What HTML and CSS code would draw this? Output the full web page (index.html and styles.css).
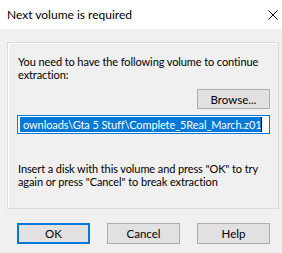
FILE: index.html
```html
<!DOCTYPE html>
<html>
<head>
<meta charset="utf-8">
<link rel="stylesheet" href="styles.css">
</head>
<body>
<div class="window">
  <div class="titlebar">
    <span class="title">Next volume is required</span>
    <svg class="close" width="10" height="10" viewBox="0 0 10 10"><path d="M0.5 0.5L9.5 9.5M9.5 0.5L0.5 9.5" stroke="#000" stroke-width="1" fill="none"/></svg>
  </div>
  <div class="client">
    <div class="group">
      <p class="msg">You need to have the following volume to continue extraction:</p>
      <div class="browse-row">
        <button class="btn">Browse...</button>
      </div>
      <div class="edit"><span class="sel">ownloads\Gta 5 Stuff\Complete_5Real_March.z01</span><span class="caret"></span></div>
      <p class="msg msg2">Insert a disk with this volume and press "OK" to try again or press "Cancel" to break extraction</p>
    </div>
    <div class="buttons">
      <button class="btn default">OK</button>
      <button class="btn">Cancel</button>
      <button class="btn">Help</button>
    </div>
  </div>
</div>
</body>
</html>
```
FILE: styles.css
```css
html, body {
  margin: 0;
  padding: 0;
}
body {
  width: 282px;
  height: 253px;
  background: #f0f0f0;
  font-family: Lato, "Noto Sans", sans-serif;
  font-size: 11px;
  letter-spacing: -0.1px;
  color: #000;
  overflow: hidden;
}
.window {
  display: flex;
  flex-direction: column;
  height: 253px;
}
.titlebar {
  height: 29px;
  background: #fff;
  display: flex;
  align-items: center;
  justify-content: space-between;
  padding: 0 4px 0 7px;
  box-sizing: border-box;
  font-size: 12px;
  letter-spacing: 0;
}
.title {
  line-height: 16px;
}
.client {
  flex: 1;
  padding: 13px 3px 0 7px;
}
.group {
  width: 272px;
  height: 167px;
  box-sizing: border-box;
  border: 1px solid #dcdcdc;
  box-shadow: inset 1px 1px 0 #fff;
  padding: 12px 8px 0 10px;
  display: flex;
  flex-direction: column;
}
.msg {
  margin: 0;
  line-height: 13px;
}
.browse-row {
  display: flex;
  justify-content: flex-end;
  margin-top: 8px;
}
.btn {
  font-family: inherit;
  font-size: 11.5px;
  letter-spacing: 0;
  color: #000;
  background: #e1e1e1;
  border: 1px solid #adadad;
  width: 73px;
  height: 21px;
  padding: 0;
  margin: 0;
  box-sizing: border-box;
}
.browse-row .btn {
  height: 20px;
}
.edit {
  margin: 6px 0 0 -1px;
  height: 19px;
  box-sizing: border-box;
  border: 1px solid #0078d7;
  background: #fff;
  padding: 1px 2px;
  display: flex;
  align-items: stretch;
  overflow: hidden;
  white-space: nowrap;
}
.sel {
  background: #0078d7;
  color: #fff;
  line-height: 15px;
  font-size: 11px;
  padding-left: 3px;
}
.caret {
  width: 1px;
  background: #000;
}
.msg2 {
  margin-top: 28px;
}
.buttons {
  display: flex;
  gap: 17px;
  margin-top: 14px;
  padding-left: 10px;
}
.btn.default {
  border: 2px solid #0078d7;
}
```
